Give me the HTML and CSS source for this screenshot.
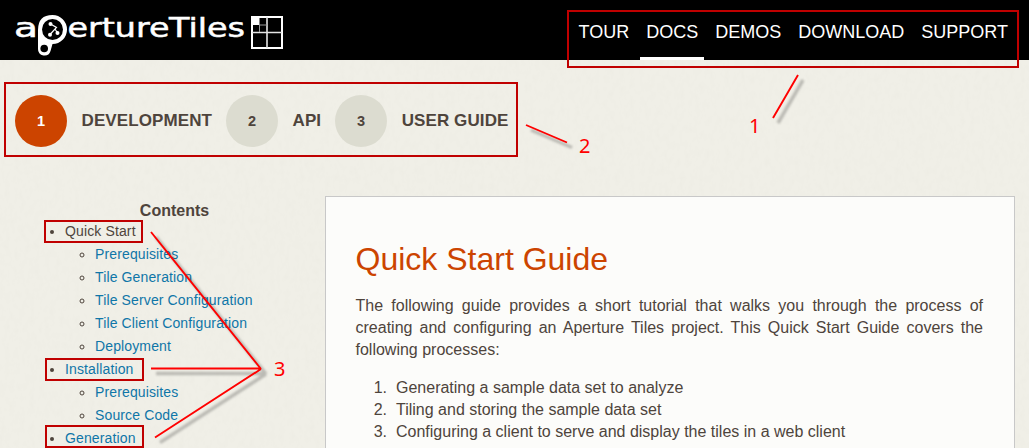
FILE: index.html
```html
<!DOCTYPE html>
<html lang="en">
<head>
<meta charset="utf-8">
<title>Aperture Tiles - Quick Start Guide</title>
<link rel="stylesheet" href="styles.css">
</head>
<body>
<svg class="paper" width="1029" height="448" aria-hidden="true">
  <filter id="grain" x="0" y="0" width="100%" height="100%">
    <feTurbulence type="fractalNoise" baseFrequency="0.2 0.12" numOctaves="3" seed="4"/>
    <feColorMatrix values="0 0 0 0 0.6  0 0 0 0 0.59  0 0 0 0 0.52  0.12 0 0 0 -0.048"/>
  </filter>
  <rect width="1029" height="448" filter="url(#grain)"/>
</svg>
<header class="topbar">
  <svg class="logo" width="272" height="48" viewBox="13 10 272 48" role="img">
    <g class="logo-text">
      <text x="14" y="36.500" textLength="24" lengthAdjust="spacingAndGlyphs">a</text>
      <text x="67.500" y="36.500" textLength="102" lengthAdjust="spacingAndGlyphs">erture</text>
      <text x="169" y="36.500" textLength="76" lengthAdjust="spacingAndGlyphs">Tiles</text>
    </g>
    <path d="M38 30 Q38 15 52.500 15 A14.500 14.500 0 0 1 52.500 44 L50.500 51 A6.400 6.400 0 0 1 38 49 Z" fill="#fff"/>
    <circle cx="52.500" cy="29.500" r="10.500"/>
    <circle cx="44.200" cy="48.500" r="3.800"/>
    <path d="M50.500 24 L56.500 27.500 L50 34.500 M55 29 L57.500 33" fill="none" stroke="#fff" stroke-width="1.200"/>
    <g fill="#fff"><circle cx="50.500" cy="24" r="2"/><circle cx="50" cy="34.800" r="2"/><circle cx="57.500" cy="33" r="2"/></g>
    <path d="M252 17 H282 V48 H252 Z" fill="none" stroke="#fff" stroke-width="2"/>
    <path d="M252 32.500 H282 M267 17 V48" fill="none" stroke="#e4e4e4" stroke-width="1.600"/>
    <path d="M259.500 25 H267 M259.500 25 V32" stroke="#999" stroke-width="1"/>
    <rect x="252" y="17" width="7.500" height="8" fill="#fff"/>
  </svg>
  <nav class="nav">
    <a>TOUR</a><a class="active">DOCS</a><a>DEMOS</a><a>DOWNLOAD</a><a>SUPPORT</a>
  </nav>
</header>
<div class="steps">
  <div class="step current"><span class="dot">1</span><span class="label">DEVELOPMENT</span></div>
  <div class="step"><span class="dot">2</span><span class="label">API</span></div>
  <div class="step"><span class="dot">3</span><span class="label">USER GUIDE</span></div>
</div>
<main class="main">
  <aside class="toc">
    <h2>Contents</h2>
    <ul>
      <li><a class="here">Quick Start</a>
        <ul><li><a>Prerequisites</a></li><li><a>Tile Generation</a></li><li><a>Tile Server Configuration</a></li><li><a>Tile Client Configuration</a></li><li><a>Deployment</a></li></ul>
      </li>
      <li><a>Installation</a>
        <ul><li><a>Prerequisites</a></li><li><a>Source Code</a></li></ul>
      </li>
      <li><a>Generation</a></li>
    </ul>
  </aside>
  <article class="content">
    <h1>Quick Start Guide</h1>
    <p>The following guide provides a short tutorial that walks you through the process of creating and configuring an Aperture Tiles project. This Quick Start Guide covers the following processes:</p>
    <ol>
      <li>Generating a sample data set to analyze</li>
      <li>Tiling and storing the sample data set</li>
      <li>Configuring a client to serve and display the tiles in a web client</li>
    </ol>
  </article>
</main>
<svg class="callouts" width="1029" height="448">
  <filter id="soft" filterUnits="userSpaceOnUse" x="0" y="0" width="1029" height="448"><feGaussianBlur stdDeviation="1.300"/></filter>
  <g fill="none" stroke="#c00000" stroke-width="2">
    <rect x="568" y="11" width="450" height="56"/>
    <rect x="5" y="83" width="512" height="73"/>
    <rect x="45" y="221" width="97" height="21"/>
    <rect x="46" y="359" width="97" height="21"/>
    <rect x="46" y="426" width="97" height="21"/>
  </g>
  <g fill="none" stroke="#000" stroke-opacity=".22" stroke-width="3.500" filter="url(#soft)" transform="translate(5 5)">
    <path d="M798 75 L773 118 M526 125 L567 142.500 M151 232 L261 369 M151 368.500 H261 M155 437.500 L261 369"/>
  </g>
  <path d="M798 75 L773 118 M526 125 L567 142.500 M151 232 L261 369 M151 368.500 H261 M155 437.500 L261 369" fill="none" stroke="#f00" stroke-width="1.900"/>
  <g class="callout-number">
    <text x="749" y="133">1</text>
    <text x="579" y="153">2</text>
    <text x="274" y="376">3</text>
  </g>
</svg>
</body>
</html>
```
FILE: styles.css
```css
* { box-sizing: border-box; }
html { overflow: hidden; }
body {
  position: relative;
  margin: 0;
  height: 448px;
  overflow: hidden;
  background: #f0efe7;
  color: #4e443c;
  font: 16px/22px "Liberation Sans", Arial, sans-serif;
}
.paper, .callouts { position: absolute; left: 0; top: 0; }
.paper { z-index: -1; }
.topbar {
  display: flex;
  justify-content: space-between;
  height: 60px;
  padding: 0 15px 0 13px;
  background: #000;
}
.logo { margin-top: 10px; }
.logo-text { font: 26px "DejaVu Sans", sans-serif; fill: #fff; stroke: #fff; stroke-width: .5px; }
.nav { display: flex; gap: 5px; }
.nav a {
  height: 60px;
  padding: 0 6px;
  color: #fff;
  font-size: 18px;
  line-height: 64px;
}
.nav .active { border-bottom: 3px solid #fff; }
.steps { display: flex; gap: 14px; padding: 35px 15px 0; }
.step { display: flex; align-items: center; gap: 14.5px; font-weight: bold; }
.dot {
  width: 52px;
  height: 52px;
  border-radius: 50%;
  background: #dcdcd0;
  font-size: 14.5px;
  line-height: 53px;
  text-align: center;
}
.current .dot { background: #cc4400; color: #fff; }
.label { font-size: 17px; line-height: 52px; letter-spacing: .1px; }
.main { display: flex; height: 301px; padding: 49px 14px 0 25px; }
.toc { width: 300px; padding-top: 4px; font-size: 14px; line-height: 23px; letter-spacing: .13px; }
.toc h2 {
  margin: 0;
  padding: 1px 1px 0 0;
  height: 20px;
  font-size: 16px;
  line-height: 20px;
  letter-spacing: 0;
  text-align: center;
}
.toc ul { margin: 0; padding-left: 40px; }
.toc ul ul { padding-left: 30px; }
.toc a { color: #0f76a8; }
.toc .here { color: #4e443c; }
.content {
  flex: 1;
  padding: 30px 31px 0 29.5px;
  border: 1px solid #c8c8c8;
  border-bottom: 0;
  background: #fcfcfa;
}
.content h1 { margin: 14px 0 18px; color: #cc4400; font-size: 32px; line-height: 36px; font-weight: normal; }
.content p { margin: 0 0 16px; text-align: justify; }
.content ol { margin: 0; padding-left: 36px; }
.content li { padding-left: 4.5px; }
.callout-number { font: 20px "Noto Sans", sans-serif; fill: #f00; }
```
